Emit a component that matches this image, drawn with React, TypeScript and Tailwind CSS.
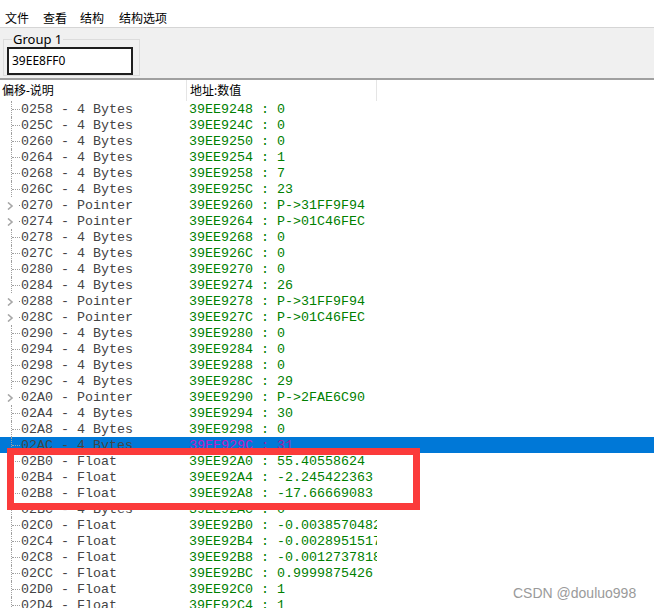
type Row = {
  off: string;
  kind: string;
  addr: string;
  val: string;
  ptr?: boolean;
  sel?: boolean;
};

const rows: Row[] = [
  { off: "0258", kind: "4 Bytes", addr: "39EE9248", val: "0" },
  { off: "025C", kind: "4 Bytes", addr: "39EE924C", val: "0" },
  { off: "0260", kind: "4 Bytes", addr: "39EE9250", val: "0" },
  { off: "0264", kind: "4 Bytes", addr: "39EE9254", val: "1" },
  { off: "0268", kind: "4 Bytes", addr: "39EE9258", val: "7" },
  { off: "026C", kind: "4 Bytes", addr: "39EE925C", val: "23" },
  { off: "0270", kind: "Pointer", addr: "39EE9260", val: "P->31FF9F94", ptr: true },
  { off: "0274", kind: "Pointer", addr: "39EE9264", val: "P->01C46FEC", ptr: true },
  { off: "0278", kind: "4 Bytes", addr: "39EE9268", val: "0" },
  { off: "027C", kind: "4 Bytes", addr: "39EE926C", val: "0" },
  { off: "0280", kind: "4 Bytes", addr: "39EE9270", val: "0" },
  { off: "0284", kind: "4 Bytes", addr: "39EE9274", val: "26" },
  { off: "0288", kind: "Pointer", addr: "39EE9278", val: "P->31FF9F94", ptr: true },
  { off: "028C", kind: "Pointer", addr: "39EE927C", val: "P->01C46FEC", ptr: true },
  { off: "0290", kind: "4 Bytes", addr: "39EE9280", val: "0" },
  { off: "0294", kind: "4 Bytes", addr: "39EE9284", val: "0" },
  { off: "0298", kind: "4 Bytes", addr: "39EE9288", val: "0" },
  { off: "029C", kind: "4 Bytes", addr: "39EE928C", val: "29" },
  { off: "02A0", kind: "Pointer", addr: "39EE9290", val: "P->2FAE6C90", ptr: true },
  { off: "02A4", kind: "4 Bytes", addr: "39EE9294", val: "30" },
  { off: "02A8", kind: "4 Bytes", addr: "39EE9298", val: "0" },
  { off: "02AC", kind: "4 Bytes", addr: "39EE929C", val: "31", sel: true },
  { off: "02B0", kind: "Float", addr: "39EE92A0", val: "55.40558624" },
  { off: "02B4", kind: "Float", addr: "39EE92A4", val: "-2.245422363" },
  { off: "02B8", kind: "Float", addr: "39EE92A8", val: "-17.66669083" },
  { off: "02BC", kind: "4 Bytes", addr: "39EE92AC", val: "0" },
  { off: "02C0", kind: "Float", addr: "39EE92B0", val: "-0.0038570482" },
  { off: "02C4", kind: "Float", addr: "39EE92B4", val: "-0.0028951517" },
  { off: "02C8", kind: "Float", addr: "39EE92B8", val: "-0.0012737818" },
  { off: "02CC", kind: "Float", addr: "39EE92BC", val: "0.9999875426" },
  { off: "02D0", kind: "Float", addr: "39EE92C0", val: "1" },
  { off: "02D4", kind: "Float", addr: "39EE92C4", val: "1" },
];

const ui = "font-['Segoe_UI','Noto_Sans','Noto_Sans_CJK_SC',sans-serif]";
const mono = "font-['Liberation_Mono','Courier_New',monospace]";

function TreeMark({ ptr }: { ptr?: boolean }) {
  if (ptr) {
    return (
      <div className="relative w-[21px] h-4 shrink-0">
        <svg className="absolute left-[7px] top-[5px]" width="7" height="8" viewBox="0 0 7 8">
          <path d="M1 0.5 L5 4 L1 7.5" fill="none" stroke="#a6a6a6" strokeWidth="1.6" />
        </svg>
        <div className="absolute left-[19px] top-[8px] w-px h-px bg-[#808080]" />
      </div>
    );
  }
  return (
    <div className="relative w-[21px] h-4 shrink-0">
      <div className="absolute left-[11px] top-0 h-4 border-l border-dotted border-[#a0a0a0]" />
      <div className="absolute left-[12px] top-[8px] w-[8px] border-t border-dotted border-[#a0a0a0]" />
    </div>
  );
}

export default function App() {
  return (
    <div className={`relative w-[654px] h-[608px] overflow-hidden bg-white ${ui}`}>
      {/* menu */}
      <div className={`h-[27px] flex items-end text-[12px] leading-4 text-black pl-[5px] ${ui}`}>
        <span>文件</span>
        <span className="ml-[14px]">查看</span>
        <span className="ml-[13px]">结构</span>
        <span className="ml-[15px]">结构选项</span>
      </div>
      <div className="h-px bg-[#d5d5d5]" />

      {/* group panel */}
      <div className="h-[52px] bg-[#f0f0f0] pt-[11px] pl-[3px] border-b-2 border-[#a0a0a0]">
        <div className="relative w-[137px] h-[37px] border border-[#dcdcdc]">
          <span className="absolute left-[8px] top-[-9px] px-[1px] bg-[#f0f0f0] text-[13px] leading-[16px] text-black">
            Group 1
          </span>
          <div className="absolute left-[3px] top-[7px] w-[126px] h-[28px] border-2 border-[#1e1e1e] bg-white flex items-center pl-[3px] text-[12px] text-black">
            39EE8FF0
          </div>
        </div>
      </div>

      {/* header */}
      <div className="flex h-[21px] text-[12px] text-black items-center">
        <div className="w-[187px] h-full pl-[2px] flex items-center border-r border-[#e5e5e5]">偏移-说明</div>
        <div className="w-[190px] h-full pl-[3px] flex items-center border-r border-[#e5e5e5]">地址:数值</div>
      </div>

      {/* rows */}
      <div className={`${mono} text-[13.33px] leading-4`}>
        {rows.map((r) => (
          <div key={r.off} className={`flex h-4 whitespace-pre ${r.sel ? "bg-[#0078d7]" : ""}`}>
            <TreeMark ptr={r.ptr} />
            <div className="relative top-px w-[168px] text-[#444444] overflow-hidden">
              {r.off} - {r.kind}
            </div>
            <div className="relative top-px w-[188px] overflow-hidden">
              <span className={r.sel ? "text-[#c020c0]" : "text-[#008000]"}>{r.addr}</span>
              <span className={r.sel ? "text-[#a020a0]" : "text-[#008000]"}> : {r.val}</span>
            </div>
          </div>
        ))}
      </div>

      {/* annotation box */}
      <div className="absolute left-[7px] top-[448px] w-[413px] h-[62px] border-[7px] border-[#fb3b3b]" />

      {/* watermark */}
      <div className="absolute left-[513px] top-[584px] text-[14px] leading-[18px] text-[#9a9a9a] font-['Liberation_Sans',Arial,sans-serif]">
        CSDN @douluo998
      </div>
    </div>
  );
}
